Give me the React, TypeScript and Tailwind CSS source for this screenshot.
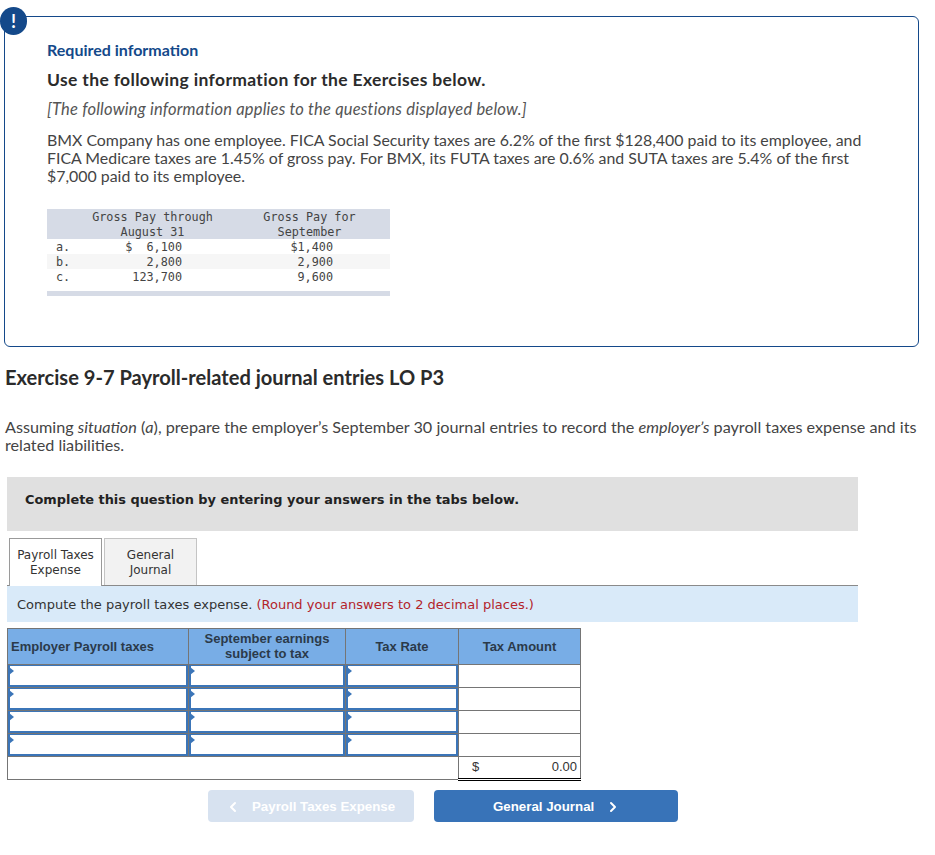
import React from "react";
import { ChevronLeft, ChevronRight } from "lucide-react";

const gross = [
  { label: "a.", through: "$  6,100", sept: "$1,400", shaded: false },
  { label: "b.", through: "2,800", sept: "2,900", shaded: true },
  { label: "c.", through: "123,700", sept: "9,600", shaded: false },
];

const InputCell = () => (
  <td className="relative border border-[#757575] p-0 h-[23px]">
    <div className="h-[22px] border-2 border-t border-[#3b75b8] bg-white" />
    <svg className="absolute left-[1px] top-[2px]" width="5" height="8" viewBox="0 0 5 8">
      <path d="M0 0 L5 4 L0 8 Z" fill="#3b75b8" />
    </svg>
  </td>
);

const App: React.FC = () => {
  return (
    <div className="relative w-[935px] h-[855px] bg-white overflow-hidden font-['Lato',sans-serif] text-[#333]">
      <div className="absolute left-0 top-[7px] w-[27px] h-[28px] rounded-full bg-[#14498a] text-white flex items-center justify-center text-[18px] font-bold">
        !
      </div>

      <div className="pt-4 pl-1 w-[919px]">
        <div className="h-[331px] border border-[#14498a] rounded-md pl-[42px] pr-[40px] pt-[23px]">
          <p className="text-[16px] leading-5 font-bold text-[#14498a]">Required information</p>
          <p className="mt-[10px] text-[17.5px] tracking-[0.35px] leading-5 font-bold text-[#2b2b2b]">
            Use the following information for the Exercises below.
          </p>
          <p className="mt-[9px] text-[16.5px] tracking-[0.2px] leading-5 italic text-[#555]">
            [The following information applies to the questions displayed below.]
          </p>
          <p className="mt-[12px] text-[15.9px] leading-[18px] text-[#444]">
            BMX Company has one employee. FICA Social Security taxes are 6.2% of the first $128,400 paid to its employee, and FICA Medicare taxes are 1.45% of gross pay. For BMX, its FUTA taxes are 0.6% and SUTA taxes are 5.4% of the first $7,000 paid to its employee.
          </p>

          <div className="mt-[24px] w-[343px] font-['DejaVu_Sans_Mono',monospace] text-[11.8px] leading-[15px] text-[#444]">
            <div className="flex h-[30px] bg-[#d6dbe6] text-center pt-px">
              <div className="w-[45px]" />
              <div className="w-[121px]">Gross Pay through<br />August 31</div>
              <div className="w-[50px]" />
              <div className="w-[93px]">Gross Pay for<br />September</div>
            </div>
            {gross.map((g) => (
              <div key={g.label} className={`flex h-[15px] pt-px ${g.shaded ? "bg-[#f6f6f6]" : "bg-white"}`}>
                <div className="w-[50px] pl-[9px]">{g.label}</div>
                <div className="w-[85px] text-right whitespace-pre">{g.through}</div>
                <div className="w-[151px] text-right">{g.sept}</div>
              </div>
            ))}
            <div className="h-[7px]" />
            <div className="h-[5px] bg-[#d6dbe6]" />
          </div>
        </div>
      </div>

      <h2 className="pl-[5px] mt-[18px] text-[20.1px] leading-[24px] font-bold text-[#2b2b2b]">
        Exercise 9-7 Payroll-related journal entries LO P3
      </h2>

      <p className="pl-[5px] pr-[15px] mt-[29px] text-[16.2px] leading-[18px] text-[#444]">
        Assuming <em>situation</em> (<em>a</em>), prepare the employer’s September 30 journal entries to record the <em>employer’s</em> payroll taxes expense and its related liabilities.
      </p>

      <div className="ml-[7px] mt-[23px] w-[851px] h-[54px] bg-[#e0e0e0] flex items-center pl-[18px] pb-[9px] font-['DejaVu_Sans',sans-serif] text-[12.9px] font-bold text-[#222]">
        Complete this question by entering your answers in the tabs below.
      </div>

      <div className="ml-[7px] w-[851px] mt-[7px] h-[48px] flex items-end border-b border-[#8a8a8a] font-['DejaVu_Sans',sans-serif] text-[12px] leading-[15px] text-[#333]">
        <div className="ml-[2px] w-[93px] h-[48px] -mb-px bg-white border border-b-0 border-[#9a9a9a] flex items-center justify-center text-center">
          Payroll Taxes<br />Expense
        </div>
        <div className="ml-[2px] w-[93px] h-[47px] pt-px bg-[#f2f2f2] border border-b-0 border-[#c4c4c4] flex items-center justify-center text-center">
          General<br />Journal
        </div>
      </div>

      <div className="ml-[7px] w-[851px] h-[36px] bg-[#d9eaf9] flex items-center pl-[10px] pt-px font-['DejaVu_Sans',sans-serif] text-[13px] text-[#333]">
        Compute the payroll taxes expense.&nbsp;<span className="text-[#b3242b]">(Round your answers to 2 decimal places.)</span>
      </div>

      <table className="ml-[7px] mt-[6px] w-[573px] table-fixed border-collapse font-['Liberation_Sans',sans-serif] text-[13px] text-[#2b3a4a]">
        <colgroup>
          <col className="w-[181px]" />
          <col className="w-[157px]" />
          <col className="w-[113px]" />
          <col className="w-[122px]" />
        </colgroup>
        <thead>
          <tr className="h-[36px] bg-[#78ade6] leading-[15px] font-bold">
            <th className="border border-[#757575] pl-[3px] text-left font-bold">Employer Payroll taxes</th>
            <th className="border border-[#757575] pb-[2px] font-bold">September earnings<br />subject to tax</th>
            <th className="border border-[#757575] font-bold">Tax Rate</th>
            <th className="border border-[#757575] font-bold">Tax Amount</th>
          </tr>
        </thead>
        <tbody>
          {[0, 1, 2, 3].map((i) => (
            <tr key={i} className="h-[23px]">
              <InputCell />
              <InputCell />
              <InputCell />
              <td className="border border-[#757575] p-0" />
            </tr>
          ))}
          <tr className="h-[23px]">
            <td colSpan={3} className="border border-[#757575] p-0" />
            <td className="border-l border-l-[#757575] border-r border-r-[#757575] border-t border-t-black border-b-[3px] border-b-black [border-bottom-style:double] p-0 text-[13px] leading-[15px] text-[#333]">
              <div className="flex justify-between pl-[13px] pr-[3px] pb-[2px]">
                <span>$</span>
                <span>0.00</span>
              </div>
            </td>
          </tr>
        </tbody>
      </table>

      <div className="flex ml-[208px] mt-[9px] gap-[20px] font-['Liberation_Sans',sans-serif] text-[13.3px] font-bold text-white">
        <div className="w-[206px] h-[32px] rounded-sm bg-[#d7e2f0] flex items-center pl-[17px] pt-px gap-[11px]">
          <ChevronLeft size={16} strokeWidth={3} />
          <span>Payroll Taxes Expense</span>
        </div>
        <div className="w-[244px] h-[32px] rounded-sm bg-[#3873b8] flex items-center pl-[59px] pt-px gap-[11px]">
          <span>General Journal</span>
          <ChevronRight size={16} strokeWidth={3} />
        </div>
      </div>
    </div>
  );
};

export default App;
